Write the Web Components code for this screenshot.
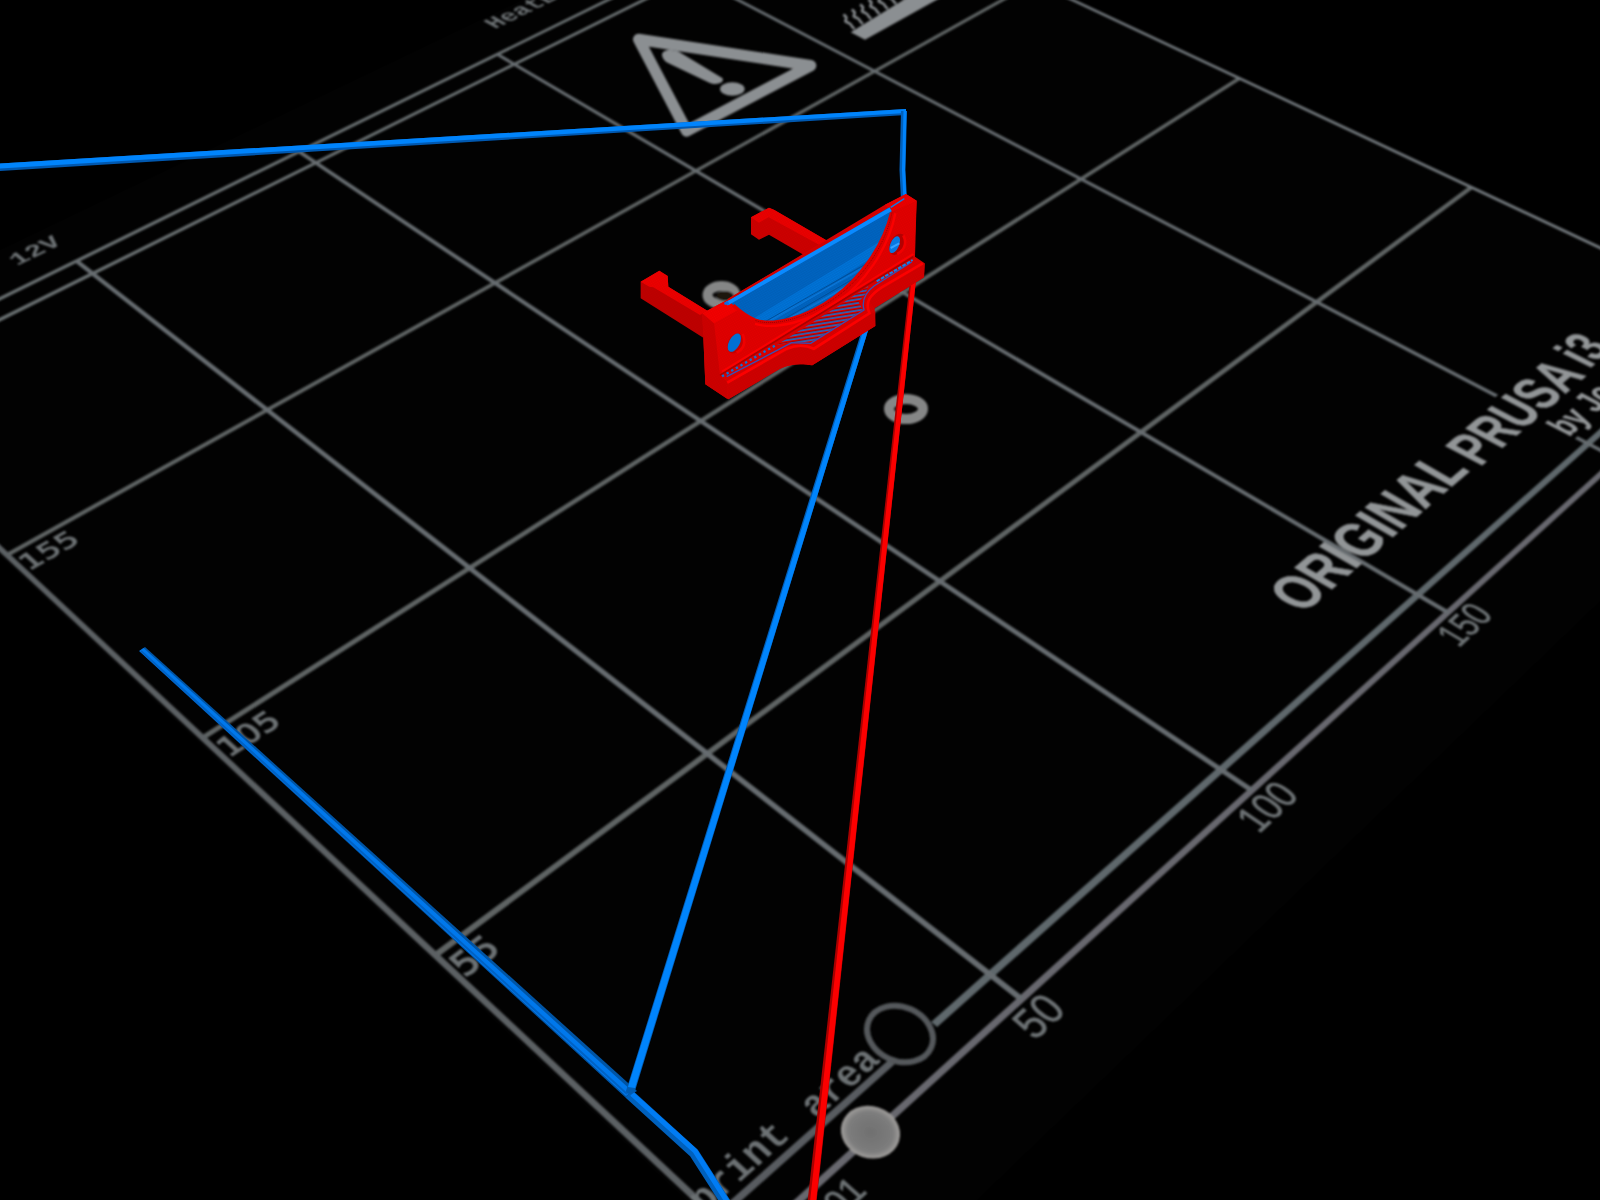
<!DOCTYPE html>
<html lang="en">
<head>
<meta charset="utf-8">
<title>G-code preview</title>
<style>
html,body{margin:0;height:100%;background:#000;overflow:hidden}
</style>
</head>
<body>
<gcode-viewer>
  <print-bed></print-bed>
  <tool-paths></tool-paths>
</gcode-viewer>

<template id="viewer-tpl">
<style>
:host{display:grid;width:100%;height:100vh;background:#000;overflow:hidden}
::slotted(*){grid-area:1/1;min-width:0;min-height:0}
</style>
<slot></slot>
</template>

<template id="bed-tpl">
<style>
:host{display:block}
svg{display:block;width:100%;height:100%}
text{fill:#6c7173;font-family:"Liberation Mono",monospace;font-weight:700}
text.depth{font-family:"DejaVu Sans",sans-serif;font-weight:400;stroke:#6c7173;stroke-width:2px}
text.logo{fill:#929597;font-family:"Liberation Sans",Arial,sans-serif;stroke:#929597;stroke-width:1px}
text.scale{font-family:"Liberation Sans Narrow","Liberation Sans",sans-serif;font-weight:400;stroke:#6c7173;stroke-width:1px}
</style>
<svg viewBox="0 0 1600 1200" preserveAspectRatio="xMidYMid slice" role="img" aria-label="Heated print bed">
<defs>
<filter id="soft" x="-5%" y="-5%" width="110%" height="110%"><feGaussianBlur stdDeviation="1.1"/></filter>
<radialGradient id="pad"><stop offset="0" stop-color="#707070"/><stop offset=".75" stop-color="#7c7c7c"/><stop offset="1" stop-color="#a09e9c"/></radialGradient>
</defs>
<g id="surface" fill="#020202"></g>
<g filter="url(#soft)">
<g id="grid"></g>
<g id="labels"></g>
<g transform="translate(460 0) scale(.33333)">
<path d="M536 118 L1052 197 L680 393 Z" fill="none" stroke="#8b8f92" stroke-width="34" stroke-linejoin="round"/>
<path d="M606 166 C604 146 646 146 664 160 L788 235 C794 252 764 256 748 248 L630 192 C614 186 608 176 606 166Z" fill="#8b8f92"/>
<ellipse cx="817" cy="267" rx="37" ry="20" fill="#8b8f92"/>
<path d="M1172 97 L1340 -6 L1440 -6 L1215 119 Z" fill="#8b8f92"/>
<g id="waves" fill="none" stroke="#85898c" stroke-width="8"></g>
</g>
<g fill="none" stroke="#858686">
<ellipse cx="721.500" cy="295" rx="14" ry="9" stroke-width="10"/>
<ellipse cx="906" cy="409" rx="17" ry="10" stroke-width="10"/>
</g>
<ellipse cx="725" cy="296" rx="9" ry="5" fill="#1c1410"/>
<ellipse cx="900" cy="1034" rx="34" ry="27" transform="rotate(24 900 1034)" fill="none" stroke="#55595c" stroke-width="6"/>
<ellipse cx="870.500" cy="1132" rx="30" ry="26" transform="rotate(18 870 1132)" fill="url(#pad)"/>
</g>
</svg>
</template>

<template id="paths-tpl">
<style>
:host{display:block}
svg{display:block;width:100%;height:100%}
</style>
<svg viewBox="0 0 1600 1200" preserveAspectRatio="xMidYMid slice" role="img" aria-label="Sliced part and travel moves">
<defs>
<pattern id="weave" width="6" height="6" patternUnits="userSpaceOnUse" patternTransform="rotate(-30)"><path d="M0 1H6M2 3V6" stroke="#900" stroke-width="1.200" opacity=".45"/></pattern>
<pattern id="weaveB" width="7" height="6" patternUnits="userSpaceOnUse" patternTransform="rotate(-31)"><path d="M0 1H7M2 3V6" stroke="#003f86" stroke-width="1.200" opacity=".5"/></pattern>
<pattern id="infill" width="60" height="11" patternUnits="userSpaceOnUse" patternTransform="rotate(-9)"><rect width="60" height="11" fill="#a00000"/><path d="M0 3H60" stroke="#0a7ce8" stroke-width="4"/><path d="M0 7H60" stroke="#e00000" stroke-width="3"/></pattern>
<clipPath id="scoop"><path d="M330 366 L808 82 L815 94 C790 200 715 300 640 350 C560 410 460 438 405 416 C375 406 355 388 330 366Z"/></clipPath>
</defs>
<!-- travel to the home corner -->
<path d="M0 163.500 L906 109 V115 L0 171Z" fill="#0058b0"/>
<path d="M0 163.500 L906 109 V113 L0 168.500Z" fill="#0084fc"/>
<path d="M904 111 L902.500 170 L904 200" fill="none" stroke="#0060bc" stroke-width="6"/>
<path d="M905 111 L903.500 170 L905 200" fill="none" stroke="#0084fc" stroke-width="3"/>
<!-- prime line -->
<path d="M139 651 L145 647 L637 1091 L626 1098Z" fill="#0054a4"/>
<path d="M139.500 651 L143.500 648 L632 1091 L626 1096Z" fill="#0078ec"/>
<path d="M141 651 L627 1094" stroke="#0062c4" stroke-width="2"/>
<path d="M629 1094 L694 1153 L728 1206" fill="none" stroke="#0060bc" stroke-width="10"/>
<path d="M632 1094 L695 1151 L730 1206" fill="none" stroke="#007cf4" stroke-width="5"/>
<path d="M862.500 328 L868.500 329 L635 1091 C634 1095 626 1095 626 1091Z" fill="#005cb4"/>
<path d="M864 328 L868.500 329 L635 1088 L628 1087Z" fill="#0084fc"/>
<path d="M910 280 L916 280 L816.500 1202 L807.500 1202Z" fill="#a80000"/>
<path d="M911.500 280 L916 280 L816 1202 L810 1202Z" fill="#fc0000"/>
<!-- sliced part -->
<g transform="translate(620 180) scale(.33333)">
<path d="M393 112 L447 83 L463 90 L628 186 L600 240 L553 226 L447 164 L417 179 L393 163Z" fill="#d00000"/>
<path d="M393 112 L447 83 L463 90 L628 186 L600 196 L446 112 L417 128Z" fill="#f00000"/>
<path d="M62 305 L118 272 L143 288 L145 320 L262 392 L250 473 L62 355Z" fill="#c00000"/>
<path d="M62 305 L118 272 L143 288 L145 320 L262 392 L240 405 L100 322 L88 320Z" fill="#f20000"/>
<path d="M247 400 L310 366 L795 74 L858 42 L890 62 L885 230 L914 250 L912 292 L764 384 L766 438 L577 556 C550 552 520 548 480 566 L325 658 L256 613Z" fill="#de0000"/>
<path d="M282 430 L345 378 C420 440 530 430 640 355 C730 290 800 200 815 98 L890 62 L882 232 L300 588Z" fill="#e60000"/>
<path d="M247 400 L282 430 L300 588 L320 604 L323 658 L256 613Z" fill="#d00000"/>
<path d="M320 612 L500 512 C535 496 565 500 580 512 L766 394 V438 L577 556 C550 552 520 548 480 566 L325 658Z" fill="#d20000"/>
<path d="M914 250 L912 292 L764 384 C735 360 740 345 775 325Z" fill="#d60000"/>
<path d="M247 400 L310 366 L345 374 L360 386 L282 430Z" fill="#fa0000"/>
<path d="M795 74 L858 42 L890 62 L816 96Z" fill="#f00000"/>
<path d="M247 400 L310 366 L795 74 L858 42 L890 62 L885 230 L914 250 L912 292 L764 384 L766 438 L577 556 C550 552 520 548 480 566 L325 658 L256 613Z M62 305 L118 272 L143 288 L145 320 L262 392 L250 473 L62 355Z M393 112 L447 83 L463 90 L628 186 L600 240 L553 226 L447 164 L417 179 L393 163Z" fill="url(#weave)"/>
<g clip-path="url(#scoop)">
<path d="M300 440 V360 L820 50 V440Z" fill="#0066c4"/>
<path d="M390 422 L800 172 V205 L450 428Z" fill="#0076dc"/>
<path d="M440 428 L780 235 M490 425 L740 285 M470 436 L700 310" stroke="#0a7ade" stroke-width="5"/>
<path d="M430 428 L790 222 M470 430 L760 262" stroke="#00509c" stroke-width="3"/>
<path d="M300 440 V360 L820 50 V440Z" fill="url(#weaveB)"/>
</g>
<path d="M815 98 C790 202 715 302 640 354 C560 412 460 440 405 420 C375 408 355 390 340 376" fill="none" stroke="#e00000" stroke-width="10"/>
<path d="M816 98 C795 202 720 302 645 354 C560 414 460 442 405 421" fill="none" stroke="#900" stroke-width="3" stroke-dasharray="3 3"/>
<path d="M826 100 C805 210 728 314 652 366 C570 424 470 450 405 432" fill="none" stroke="#fa0000" stroke-width="7"/>
<path d="M320 371 L812 88" stroke="#0a8aff" stroke-width="12"/>
<path d="M312 368 L322 362 L330 374 L314 374Z" fill="#0a6ee0"/>
<path d="M812 82 L853 56" stroke="#0a7ce8" stroke-width="4"/>
<path d="M326 358 L798 80" stroke="#d00000" stroke-width="5"/>
<!-- screw holes -->
<ellipse cx="346" cy="490" rx="22" ry="32" transform="rotate(28 346 490)" fill="#c40000"/>
<ellipse cx="343" cy="488" rx="16" ry="30" transform="rotate(28 343 488)" fill="#0070d4"/>
<path d="M350 518 C372 505 378 490 368 462" fill="none" stroke="#f00000" stroke-width="8"/>
<ellipse cx="832" cy="193" rx="22" ry="34" transform="rotate(28 832 193)" fill="#b40000"/>
<ellipse cx="824" cy="194" rx="13" ry="27" transform="rotate(24 824 194)" fill="#0878e0"/>
<path d="M812 204 L838 190" stroke="#34a0ff" stroke-width="6"/>
<path d="M832 222 C852 210 862 190 850 166" fill="none" stroke="#f00000" stroke-width="8"/>
<!-- ledge and exposed infill -->
<path d="M300 586 L880 230" stroke="#a80000" stroke-width="5"/>
<path d="M306 575 L880 222" stroke="#fa0000" stroke-width="6"/>
<path d="M470 495 L640 388 L745 318 L736 342 L716 366 L728 390 L572 488 L512 486Z" fill="url(#infill)"/>
<path d="M320 590 L515 488 L572 490 L732 390 C724 360 736 338 762 318 L875 246" fill="none" stroke="#3450b8" stroke-width="4"/>
<path d="M306 589 L470 494" stroke="#0a70d8" stroke-width="7" stroke-dasharray="7 9"/>
<path d="M770 304 L878 240" stroke="#1080e8" stroke-width="6" stroke-dasharray="11 4"/>
<path d="M322 608 L500 506 C535 492 560 496 582 506 L748 400 C734 365 750 345 785 322 L908 250" fill="none" stroke="#fc0000" stroke-width="8"/>
</g>
</svg>
</template>

<script>
const tpl = id => document.getElementById(id).content.cloneNode(true);

/* Projective map through four point pairs [u, v, x, y]. */
function homography(pairs) {
  const m = [];
  for (const [u, v, x, y] of pairs) {
    m.push([u, v, 1, 0, 0, 0, -u * x, -v * x, x]);
    m.push([0, 0, 0, u, v, 1, -u * y, -v * y, y]);
  }
  for (let i = 0; i < 8; i++) {
    let p = i;
    for (let r = i; r < 8; r++) if (Math.abs(m[r][i]) > Math.abs(m[p][i])) p = r;
    [m[i], m[p]] = [m[p], m[i]];
    for (let r = 0; r < 8; r++) {
      if (r === i) continue;
      const f = m[r][i] / m[i][i];
      for (let c = i; c < 9; c++) m[r][c] -= f * m[i][c];
    }
  }
  const h = m.map((row, i) => row[8] / row[i]);
  return (u, v) => {
    const w = h[6] * u + h[7] * v + 1;
    return [(h[0] * u + h[1] * v + h[2]) / w, (h[3] * u + h[4] * v + h[5]) / w];
  };
}

/* Bed millimetres to view units, and back. */
const anchors = [[0, 155, 7, 555], [50, 0, 1021.5, 999], [250, 55, 1471.4, 187.3], [150, 210, 497.3, 54.3]];
const project = homography(anchors);
const unproject = homography(anchors.map(([u, v, x, y]) => [x, y, u, v]));

const NS = 'http://www.w3.org/2000/svg';
const make = (name, attrs, parent) => {
  const e = document.createElementNS(NS, name);
  for (const k in attrs) e.setAttribute(k, attrs[k]);
  parent.append(e);
  return e;
};
const quad = (x0, y0, x1, y1) => [[x0, y0], [x1, y0], [x1, y1], [x0, y1]]
  .map(([x, y]) => project(x, y).map(n => n.toFixed(1)).join(',')).join(' ');

customElements.define('gcode-viewer', class extends HTMLElement {
  constructor() { super(); this.attachShadow({ mode: 'open' }).append(tpl('viewer-tpl')); }
});

customElements.define('print-bed', class extends HTMLElement {
  constructor() {
    super();
    const root = this.attachShadow({ mode: 'open' });
    root.append(tpl('bed-tpl'));
    const grid = root.getElementById('grid');
    const labels = root.getElementById('labels');
    make('polygon', { points: quad(-1, -14, 251, 222) }, root.getElementById('surface'));

    const alongX = (y, x0, x1, w, c) => make('polygon', { points: quad(x0, y - w / 2, x1, y + w / 2), fill: c }, grid);
    const alongY = (x, y0, y1, w, c) => make('polygon', { points: quad(x - w / 2, y0, x + w / 2, y1), fill: c }, grid);
    alongX(0, 0, 250, .9, '#68686e');
    alongX(5, 0, 31, .9, '#585c60');
    alongX(5, 39, 250, 1, '#5e686c');
    for (const y of [55, 105, 155]) alongX(y, 0, 250, .9, '#5e6464');
    alongX(205, 0, 250, .9, '#686e70');
    alongX(210, 0, 250, .9, '#686e70');
    alongY(0, 0, 210, .9, '#5c6064');
    for (const x of [50, 100, 150]) alongY(x, 0, 210, .9, '#666c70');
    alongY(200, 0, 7, .9, '#666c70');
    alongY(200, 21, 210, .9, '#666c70');
    alongY(250, 0, 210, .9, '#70767a');

    /* A label lies flat on the bed; its baseline starts at view point (x, y).
       Type size and run length are in tenths of a millimetre. */
    const label = (text, x, y, size, run, cls = '') => {
      const [u, v] = unproject(x, y);
      const w = run / 10, h = size / 10;
      const b = project(u + w, v);
      const m = project(u + w / 2, v), t = project(u + w / 2, v + h);
      const k = [(b[0] - x) / run, (b[1] - y) / run, (m[0] - t[0]) / size, (m[1] - t[1]) / size, x, y];
      make('text', { transform: `matrix(${k.map(n => n.toFixed(4)).join(' ')})`, 'font-size': size, class: cls }, labels).textContent = text;
    };
    label('155', 29, 571, 50, 100, 'depth');
    label('105', 229, 758, 50, 100, 'depth');
    label('55', 465, 978, 50, 60, 'depth');
    label('12V', 17, 266, 54, 97);
    label('HeatBed', 495, 29, 60, 250);
    label('50', 1035, 1041, 58, 50, 'scale');
    label('100', 1259, 834, 58, 80, 'scale');
    label('150', 1459, 648, 58, 80, 'scale');
    label('01', 840, 1218, 44, 40, 'scale');
    label('print', 704, 1214, 50, 150);
    label('area', 816, 1119, 50, 120);
    label('ORIGINAL', 1303, 614, 95, 465, 'logo');
    label('PRUSA', 1480, 467, 95, 325, 'logo');
    label('i3', 1589, 369, 95, 80, 'logo');
    label('by Jo', 1569, 437, 60, 140, 'logo');

    const waves = root.getElementById('waves');
    for (let i = 0; i < 9; i++) {
      const x = 1184 + i * 25, y = 86 - i * 15;
      make('path', { d: `M${x} ${y} c-14 -6 -4 -10 -16 -16 s-14 -4 -10 -12 s-2 -10 -8 -14` }, waves);
    }
  }
});

customElements.define('tool-paths', class extends HTMLElement {
  constructor() { super(); this.attachShadow({ mode: 'open' }).append(tpl('paths-tpl')); }
});
</script>
</body>
</html>
